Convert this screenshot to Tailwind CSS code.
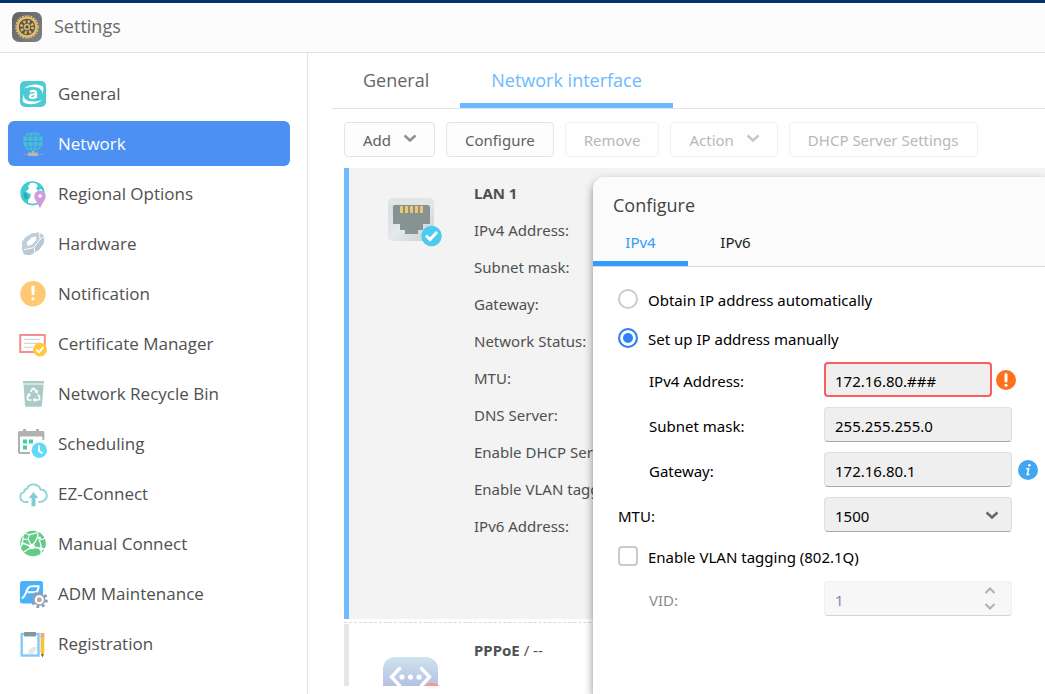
<!doctype html>
<html lang="en">
  <head>
    <meta charset="UTF-8" />
    <meta name="viewport" content="width=device-width, initial-scale=1.0" />
    <title>Settings - Network</title>
    <script src="https://cdn.jsdelivr.net/npm/@tailwindcss/browser@4"></script>
  </head>

  <body class="relative flex flex-col h-screen overflow-hidden bg-white font-['Noto_Sans',sans-serif] text-[15px] leading-5 text-[#505050]">
    <!-- Window title -->
    <header class="flex shrink-0 items-center gap-3 h-[53px] px-3 pb-px bg-[#fcfcfc] border-t-3 border-t-[#003366] border-b border-b-[#e3e3e3]">
      <svg class="size-[30px]" viewBox="0 0 30 30" fill="none">
        <defs>
          <linearGradient id="appBg" x1="0" y1="0" x2="1" y2="1">
            <stop stop-color="#606266" />
            <stop offset="1" stop-color="#808286" />
          </linearGradient>
        </defs>
        <rect width="30" height="30" rx="7" fill="url(#appBg)" />
        <circle cx="15" cy="15" r="11" stroke="#e3bf6c" stroke-width="1.6" stroke-dasharray="1.8 1.1" />
        <circle cx="15" cy="15" r="9.4" stroke="#e3bf6c" stroke-width="2.2" />
        <circle cx="15" cy="15" r="8" fill="#5a564c" />
        <circle cx="15" cy="15" r="5.6" stroke="#d9b566" stroke-width="3" stroke-dasharray="2.2 2.2" />
        <circle cx="15" cy="15" r="3.2" fill="#d9b566" />
        <circle cx="15" cy="15" r="1.6" fill="#4c4a46" />
      </svg>
      <h1 class="pb-[3px] text-lg leading-6 text-[#6b6b6b] font-['Open_Sans',sans-serif]">Settings</h1>
    </header>

    <div class="flex flex-1 min-h-0">
      <!-- Sidebar -->
      <nav class="flex flex-col shrink-0 gap-[5px] w-[308px] pt-[18px] pl-2 pr-[17px] border-r border-[#e3e3e3] text-[17px] leading-6 font-['Open_Sans',sans-serif]">
        <a href="#general" class="flex items-center gap-3 h-[45px] px-[10px] rounded-md">
          <svg class="size-7 overflow-visible" viewBox="0 0 28 28" fill="none">
            <rect x="2" y="1" width="26" height="26" rx="5" fill="#4accd2" />
            <path d="M6 8.500C11 4 20 3 25 6.500C26 9 25 12 24 14C25 8 18 5 6 8.500Z" fill="#fff" />
            <path d="M24 20C19 25 10 25.500 5 22C4 19 5 16 6 14.500C5 20.500 12 23.500 24 20Z" fill="#fff" />
            <path d="M12 11.800C14 10.300 18 10.300 18 13V18M18 14.200C14.500 14.200 12 14.800 12 16.500C12 19 17 18.500 18 16" stroke="#fff" stroke-width="2.200" />
          </svg>
          General
        </a>
        <a href="#network" aria-current="page" class="flex items-center gap-3 h-[45px] px-[10px] rounded-md bg-[#4d90f3] text-white">
          <svg class="size-7 overflow-visible" viewBox="0 0 28 28" fill="none">
            <circle cx="15" cy="11.500" r="10" fill="#42c3cf" />
            <g stroke="#4d90f3" stroke-width="1">
              <ellipse cx="15" cy="11.500" rx="5.500" ry="10" />
              <path d="M15 1.500V21.500M5 11.500H25M7 6H23M7 17H23" />
            </g>
            <path d="M5 24.500H25" stroke="#8ba4b8" />
            <rect x="10" y="22.500" width="10" height="3.500" fill="#b4b6b4" />
            <path d="M15 21V23" stroke="#b4b6b4" stroke-width="2" />
          </svg>
          Network
        </a>
        <a href="#regional" class="flex items-center gap-3 h-[45px] px-[10px] rounded-md">
          <svg class="size-7 overflow-visible" viewBox="0 0 28 28" fill="none">
            <circle cx="14.500" cy="13.300" r="11.300" fill="#fff" stroke="#43cbd0" stroke-width="1.600" />
            <path d="M3 12C3 7 6 3 11 1.800L12 4L10 6L11 9L8 11L10 13L13 14L12 18L10 20V24C6 22 3 18 3 12Z" fill="#43cbd0" />
            <path d="M17 2C22 3 25 6 26 10L22 9L20 11L18 8L20 6Z" fill="#43cbd0" />
            <path d="M6 12L9 14L10.500 17L8 20C6 18 5 15 6 12Z" fill="#2aa9b8" />
            <path d="M22 10.500A5.700 5.700 0 0 1 27.700 16.200C27.700 20 24 22.500 22 28.500C20 22.500 16.300 20 16.300 16.200A5.700 5.700 0 0 1 22 10.500Z" fill="#cf9bdd" />
            <circle cx="22" cy="16" r="1.800" fill="#fff" />
          </svg>
          Regional Options
        </a>
        <a href="#hardware" class="flex items-center gap-3 h-[45px] px-[10px] rounded-md">
          <svg class="size-7 overflow-visible" viewBox="0 0 28 28" fill="none">
            <path d="M14 3.500L21 2.500L26 5.500V13L21 20L12 25.200L6 24.500L4 19V12L8 7Z" fill="#b8c8d5" />
            <path d="M14 3.500L21 2.500L21.500 9L16 17L6.500 19L4 19V12L8 7Z" fill="#c0ced9" />
            <path d="M13.500 7.500L18 6.300L18.300 10L14 14.700L9.500 16L8.700 12.500Z" fill="#fff" />
            <path d="M21.500 2.500L22 9.500L16 17.500L6 19.800M22 9.500L26.500 6M16 17.500L17 23.500" stroke="#fff" stroke-width="1" />
          </svg>
          Hardware
        </a>
        <a href="#notification" class="flex items-center gap-3 h-[45px] px-[10px] rounded-md">
          <svg class="size-7 overflow-visible" viewBox="0 0 28 28" fill="none">
            <circle cx="15" cy="13.700" r="12.700" fill="#ffc973" />
            <path d="M13.200 7.300A1.800 1.800 0 0 1 16.800 7.300L16.200 15H13.800Z" fill="#fff" />
            <circle cx="15" cy="18.800" r="1.600" fill="#fff" />
          </svg>
          Notification
        </a>
        <a href="#certificate" class="flex items-center gap-3 h-[45px] px-[10px] rounded-md">
          <svg class="size-7 overflow-visible" viewBox="0 0 28 28" fill="none">
            <rect x="2.200" y="5" width="24.600" height="17" fill="#fff" stroke="#fb8b8d" stroke-width="2" />
            <path d="M6 9.300H22M6 13.300H22M6 17.300H15" stroke="#d5d8da" stroke-width="1.200" />
            <circle cx="22" cy="19.700" r="6.900" fill="#ffc83f" />
            <path d="M18.300 19.800L21 22.300L25.600 16.800" stroke="#fff" stroke-width="2" />
          </svg>
          Certificate Manager
        </a>
        <a href="#recycle" class="flex items-center gap-3 h-[45px] px-[10px] rounded-md">
          <svg class="size-7 overflow-visible" viewBox="0 0 28 28" fill="none">
            <path d="M5 1H26V3.500H5Z" fill="#a9cbc8" />
            <path d="M5.500 4.500H25.500L24 25.500Q24 26.700 22.500 26.700H8.500Q7 26.700 7 25.500Z" fill="#a9cbc8" />
            <path d="M12.500 12L14.500 8.800Q15.500 7.800 16.500 8.800L18.500 12M20 14.500L21.500 17.500Q22 20 20 20H17M13.500 20H11Q8.800 20 9.500 17.500L11 14.500" stroke="#fff" stroke-width="1.700" />
            <path d="M20.300 9.700L19.600 13.500L16 12ZM17.500 17.200V22.600L14.700 20ZM8.500 14.500L12 13L12.800 16.700Z" fill="#fff" />
          </svg>
          Network Recycle Bin
        </a>
        <a href="#scheduling" class="flex items-center gap-3 h-[45px] px-[10px] rounded-md">
          <svg class="size-7 overflow-visible" viewBox="0 0 28 28" fill="none">
            <path d="M25.300 10V3.500Q25.300 2.500 24.300 2.500H2Q1 2.500 1 3.500V22Q1 23 2 23H12" stroke="#b1b1b1" stroke-width="2" />
            <path d="M0 2.500Q0 1 1.500 1H24.800Q26.300 1 26.300 2.500V6.500H0Z" fill="#b1b1b1" />
            <path d="M5 -1H8V3H5ZM18 -1H21V3H18Z" fill="#b1b1b1" />
            <path d="M5 9.500H9V13.500H5ZM11 9.500H15V13.500H11ZM5 15.500H9V19.500H5Z" fill="#43cf96" />
            <circle cx="21.300" cy="20.300" r="7.700" fill="#62dbfb" />
            <path d="M21 15.500V21L24.500 23.500" stroke="#fff" stroke-width="2" />
          </svg>
          Scheduling
        </a>
        <a href="#ez-connect" class="flex items-center gap-3 h-[45px] px-[10px] rounded-md">
          <svg class="size-7 overflow-visible" viewBox="0 0 28 28" fill="none">
            <path d="M10.500 22H7A5 5 0 0 1 6 12.200A4 4 0 0 1 9 8.500A7.300 7.300 0 0 1 22.500 9.500A6 6 0 0 1 26 20.500Q24.500 22 20.500 22" stroke="#8cd6da" stroke-width="1.900" />
            <path d="M15.500 12L20.300 18H17.500V26.300H13.500V18H10.700Z" fill="#7fd0d4" />
          </svg>
          EZ-Connect
        </a>
        <a href="#manual" class="flex items-center gap-3 h-[45px] px-[10px] rounded-md">
          <svg class="size-7 overflow-visible" viewBox="0 0 28 28" fill="none">
            <circle cx="15" cy="13.500" r="12.800" fill="#62cb87" />
            <path d="M10 5Q17 4 22 1M9 7L13 15M20 3Q20 10 14 15.500M5 8Q5 14 2 18M3 13Q10 14 14 18M14 17L4 23M14 17L27 19M21 10Q24 15 23 24M22 10L28 8" stroke="#fff" stroke-width="1.300" />
            <circle cx="8" cy="6.500" r="3" fill="#62cb87" stroke="#fff" />
            <circle cx="14" cy="16.500" r="2.800" fill="#fff" />
            <circle cx="21.500" cy="8" r="1.600" fill="#fff" />
            <circle cx="23" cy="19" r="1.800" fill="#fff" />
          </svg>
          Manual Connect
        </a>
        <a href="#maintenance" class="flex items-center gap-3 h-[45px] px-[10px] rounded-md">
          <svg class="size-7 overflow-visible" viewBox="0 0 28 28" fill="none">
            <rect x="2" y="1" width="23" height="22.500" rx="2.500" fill="#4ab1fc" />
            <path d="M4 18.500C7 16.500 8 12 9.500 9Q11 6.200 14 6.200H20.500Q20.500 12.300 16.500 12.300H9.500" stroke="#fff" stroke-width="2" />
            <circle cx="21.300" cy="19.700" r="6.800" stroke="#8d9dae" stroke-width="3.400" stroke-dasharray="2.700 2.640" />
            <circle cx="21.300" cy="19.700" r="6.200" fill="#97a5b4" />
            <circle cx="21.300" cy="19.700" r="3.500" fill="#b3adb0" stroke="#fff" stroke-width="2" />
          </svg>
          ADM Maintenance
        </a>
        <a href="#registration" class="flex items-center gap-3 h-[45px] px-[10px] rounded-md">
          <svg class="size-7 overflow-visible" viewBox="0 0 28 28" fill="none">
            <rect x="3.700" y="4" width="16.800" height="21.500" fill="#fff" stroke="#84c9fb" stroke-width="2.400" />
            <path d="M10.500 24.300V20L15 17H19.300Q18 22 13 24.300Z" fill="#e5e9ec" />
            <rect x="6" y="2" width="12" height="4.500" rx="1" fill="#8295a0" />
            <path d="M22.500 6H26.300V22.500L24.400 27L22.500 22.500Z" fill="#f9c13c" />
            <path d="M22.500 3H26.300V5.500H22.500Z" fill="#f9a06a" />
            <path d="M22.500 5.500H26.300V7H22.500Z" fill="#a7b4be" />
            <path d="M23 24L24.400 27.500L25.800 24Z" fill="#6a5c52" />
          </svg>
          Registration
        </a>
      </nav>

      <!-- Content -->
      <main class="flex flex-col flex-1 min-w-0 pl-6 pb-2">
        <div role="tablist" class="flex shrink-0 h-14 border-b border-[#e3e3e3] text-lg leading-6 font-['Open_Sans',sans-serif]">
          <button role="tab" class="px-[31px] pb-0.5 text-[#666]">General</button>
          <button role="tab" aria-selected="true" class="px-[31px] pt-1 border-b-5 border-[#6cb9ff] text-[#6cb9ff]">Network interface</button>
        </div>

        <div class="flex shrink-0 gap-[11px] pl-3 pt-[13px] pb-[11px] whitespace-nowrap text-[#606060]">
          <button class="flex items-center gap-[13px] h-[35px] px-[18px] border border-[#e3e3e3] rounded bg-[#fdfdfd]">
            Add
            <svg class="w-3 h-2 mb-1" viewBox="0 0 12 8" fill="none"><path d="M0.500 1.500L6 6.500L11.500 1.500" stroke="#8f8f8f" stroke-width="2.500" /></svg>
          </button>
          <button class="h-[35px] px-[18px] border border-[#e3e3e3] rounded bg-[#fdfdfd]">Configure</button>
          <button disabled class="h-[35px] px-[18px] border border-[#f1f1f1] rounded bg-[#fefefe] text-[#b8b8b8]">Remove</button>
          <button disabled class="flex items-center gap-[13px] h-[35px] px-[18px] border border-[#f1f1f1] rounded bg-[#fefefe] text-[#b8b8b8]">
            Action
            <svg class="w-3 h-2 mb-1" viewBox="0 0 12 8" fill="none"><path d="M0.500 1.500L6 6.500L11.500 1.500" stroke="#c6c6c6" stroke-width="2.500" /></svg>
          </button>
          <button disabled class="h-[35px] px-[18px] border border-[#f1f1f1] rounded bg-[#fefefe] text-[#b8b8b8]">DHCP Server Settings</button>
        </div>

        <div class="flex-1 min-h-0 ml-3 overflow-hidden">
          <section class="flex h-[451px] pt-[9px] border-l-5 border-[#70bbff] bg-[#f3f3f3]">
            <div class="w-[125px] shrink-0 pl-[38px] pt-5">
              <svg class="w-[56px] h-[50px]" viewBox="0 0 56 50" fill="none">
                <defs>
                  <linearGradient id="portBody" x1="0" y1="0" x2="1" y2="1">
                    <stop stop-color="#d5dcde" />
                    <stop offset="0.500" stop-color="#e4e9ea" />
                    <stop offset="1" stop-color="#c7cfd2" />
                  </linearGradient>
                </defs>
                <rect x="1" y="1" width="46" height="43" rx="5" fill="url(#portBody)" />
                <path d="M1 10V6Q1 1 6 1H42Q47 1 47 6V10L43 7H5Z" fill="#e1e5e6" />
                <path d="M8 8H41Q43 8 43 10V27H36V33H31V37H18V33H13V27H6V10Q6 8 8 8Z" fill="#879393" />
                <path d="M14.500 9V16M19.500 9V16M24.500 9V16M29.500 9V16M34.500 9V16" stroke="#efc56d" stroke-width="3" />
                <circle cx="44.500" cy="39" r="10.300" fill="#4ccbf0" />
                <path d="M39 38.500L43 42.500L50 35" stroke="#fff" stroke-width="3" />
              </svg>
            </div>
            <div class="flex flex-col gap-[17px] pt-[7px] whitespace-nowrap">
              <h2 class="font-bold leading-[19px]">LAN 1</h2>
              <p>IPv4 Address:</p>
              <p>Subnet mask:</p>
              <p>Gateway:</p>
              <p>Network Status:</p>
              <p>MTU:</p>
              <p>DNS Server:</p>
              <p>Enable DHCP Server:</p>
              <p>Enable VLAN tagging:</p>
              <p>IPv6 Address:</p>
            </div>
          </section>

          <div class="h-[5px] pt-[3px]"><div class="border-t border-dashed border-[#d8d8e0]"></div></div>

          <section class="flex h-[451px] border-l-5 border-[#e6e6e6]">
            <div class="w-[125px] shrink-0 pl-[33px] pt-[33px]">
              <svg class="w-[58px] h-[56px]" viewBox="0 0 58 56" fill="none">
                <defs>
                  <linearGradient id="pppoeBg" x1="0" y1="0" x2="0" y2="1">
                    <stop stop-color="#cfe3ec" />
                    <stop offset="0.550" stop-color="#b3c0e2" />
                    <stop offset="1" stop-color="#a9b2dc" />
                  </linearGradient>
                </defs>
                <rect x="1" width="55" height="55" rx="12" fill="url(#pppoeBg)" />
                <path d="M17.500 11.500L9.500 20L17.500 28.500M39.500 11.500L47.500 20L39.500 28.500" stroke="#fff" stroke-width="3.400" stroke-linecap="round" />
                <circle cx="20" cy="20" r="2.600" fill="#fff" />
                <circle cx="28.500" cy="20" r="2.600" fill="#fff" />
                <circle cx="37" cy="20" r="2.600" fill="#fff" />
                <circle cx="50" cy="36" r="10.300" fill="#ff9191" />
              </svg>
            </div>
            <h2 class="pt-4"><b>PPPoE</b> / --</h2>
          </section>
        </div>
      </main>
    </div>

    <!-- Configure dialog -->
    <div role="dialog" aria-labelledby="dialogTitle" class="absolute top-[177px] left-[593px] right-0 bottom-0 rounded-tl-xl bg-white text-[#1a1a1a] shadow-[0_4px_8px_rgb(0_0_0/0.45)]">
      <div class="h-[90px] pt-4 rounded-tl-xl bg-[#fbfbfb] border-b border-[#d9d9d9]">
        <h2 id="dialogTitle" class="px-5 text-lg leading-6 text-[#444] font-['Open_Sans',sans-serif]">Configure</h2>
        <div role="tablist" class="flex h-[49px]">
          <button role="tab" aria-selected="true" class="w-[95px] pt-[6px] border-b-5 border-[#339cff] text-[#339cff]">IPv4</button>
          <button role="tab" class="w-[95px] pt-px">IPv6</button>
        </div>
      </div>

      <form class="pl-[25px] pt-[21px] text-black">
        <div class="flex items-center gap-[10px] h-[21px]">
          <input type="radio" id="ipAuto" name="ipMode" class="appearance-none size-5 rounded-full border-2 border-[#c8ccd0]" />
          <label for="ipAuto" class="pt-[3px]">Obtain IP address automatically</label>
        </div>
        <div class="flex items-center gap-[10px] h-[21px] mt-[18px]">
          <input type="radio" id="ipManual" name="ipMode" checked class="appearance-none size-5 rounded-full border-2 border-[#2e80fb] bg-[#2e80fb] shadow-[inset_0_0_0_3px_#fff]" />
          <label for="ipManual" class="pt-[3px]">Set up IP address manually</label>
        </div>

        <div class="flex flex-col gap-[10px] mt-[14px]">
          <div class="flex items-center">
            <label for="ipv4" class="w-[206px] shrink-0 pl-[31px] pt-0.5">IPv4 Address:</label>
            <input type="text" id="ipv4" value="172.16.80.###" class="w-[168px] h-[35px] px-[9px] pt-0.5 border-2 border-[#fa5c5f] rounded bg-[#efefef]" />
            <svg class="size-5 ml-1 shrink-0" viewBox="0 0 20 20" fill="none">
              <circle cx="10" cy="10" r="10" fill="#ff6f1d" />
              <path d="M10 4.500V11" stroke="#fff" stroke-width="3" stroke-linecap="round" />
              <circle cx="10" cy="15.300" r="1.500" fill="#fff" />
            </svg>
          </div>
          <div class="flex items-center">
            <label for="subnet" class="w-[206px] shrink-0 pl-[31px] pt-0.5">Subnet mask:</label>
            <input type="text" id="subnet" value="255.255.255.0" class="w-[188px] h-[35px] px-[10px] pt-0.5 border border-[#dfdfdf] border-b-[#a9a9a9] rounded bg-[#efefef]" />
          </div>
          <div class="flex items-center">
            <label for="gateway" class="w-[206px] shrink-0 pl-[31px] pt-0.5">Gateway:</label>
            <input type="text" id="gateway" value="172.16.80.1" class="w-[188px] h-[35px] px-[10px] pt-0.5 border border-[#dfdfdf] border-b-[#a9a9a9] rounded bg-[#efefef]" />
            <svg class="size-5 ml-[6px] shrink-0" viewBox="0 0 20 20" fill="none">
              <circle cx="10" cy="10" r="10" fill="#41a5f0" />
              <circle cx="11.400" cy="5.200" r="1.300" fill="#fff" />
              <path d="M8.300 8.800H10.700L9.200 14.600H11.500" stroke="#fff" stroke-width="1.500" />
            </svg>
          </div>
          <div class="flex items-center">
            <label for="mtu" class="w-[206px] shrink-0 pt-0.5">MTU:</label>
            <div class="relative w-[188px]">
              <select id="mtu" class="block appearance-none w-full h-[35px] px-[10px] pt-0.5 border border-[#dfdfdf] border-b-[#a9a9a9] rounded bg-[#efefef]">
                <option>1500</option>
              </select>
              <svg class="absolute right-[14px] top-[14px] w-3 h-2 pointer-events-none" viewBox="0 0 12 8" fill="none"><path d="M0.500 1.500L6 6.500L11.500 1.500" stroke="#666" stroke-width="2.500" /></svg>
            </div>
          </div>
        </div>

        <div class="flex items-center gap-[10px] h-[21px] mt-[13px]">
          <input type="checkbox" id="vlan" class="appearance-none size-5 rounded border-2 border-[#c8ccd0]" />
          <label for="vlan" class="pt-[3px]">Enable VLAN tagging (802.1Q)</label>
        </div>

        <div class="flex items-center mt-[15px] text-[#8c8c8c]">
          <label for="vid" class="w-[206px] shrink-0 pl-[31px] pt-0.5">VID:</label>
          <div class="relative w-[188px]">
            <input type="text" inputmode="numeric" id="vid" value="1" disabled class="block w-full h-[35px] px-[10px] pt-0.5 border border-[#efefef] border-b-[#d4d4d4] rounded bg-[#f7f7f7] text-[#8888a8]" />
            <div class="absolute right-4 top-[6px] flex flex-col gap-[9px]">
              <button type="button" disabled aria-label="Increase VID"><svg class="block w-3 h-[7px]" viewBox="0 0 12 7" fill="none"><path d="M1.500 6L6 1.500L10.500 6" stroke="#b0b0b0" stroke-width="2" /></svg></button>
              <button type="button" disabled aria-label="Decrease VID"><svg class="block w-3 h-[7px]" viewBox="0 0 12 7" fill="none"><path d="M1.500 1L6 5.500L10.500 1" stroke="#b0b0b0" stroke-width="2" /></svg></button>
            </div>
          </div>
        </div>
      </form>
    </div>
  </body>
</html>
